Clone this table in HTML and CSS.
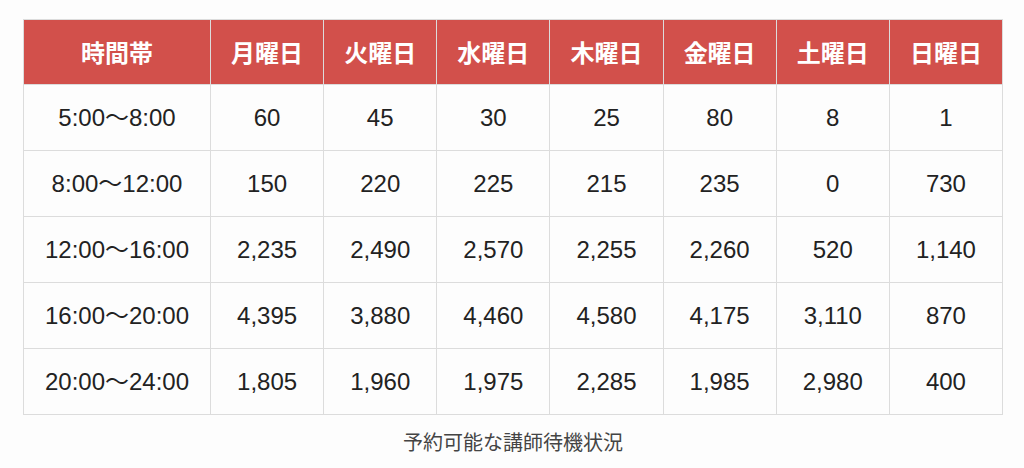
FILE: index.html
```html
<!DOCTYPE html>
<html lang="ja">
<head>
<meta charset="utf-8">
<link rel="stylesheet" href="styles.css">
</head>
<body>
<div class="wrap">
<table class="sched">
<caption>予約可能な講師待機状況</caption>
<thead>
<tr><th class="first">時間帯</th><th>月曜日</th><th>火曜日</th><th>水曜日</th><th>木曜日</th><th>金曜日</th><th>土曜日</th><th>日曜日</th></tr>
</thead>
<tbody>
<tr><td>5:00～8:00</td><td>60</td><td>45</td><td>30</td><td>25</td><td>80</td><td>8</td><td>1</td></tr>
<tr><td>8:00～12:00</td><td>150</td><td>220</td><td>225</td><td>215</td><td>235</td><td>0</td><td>730</td></tr>
<tr><td>12:00～16:00</td><td>2,235</td><td>2,490</td><td>2,570</td><td>2,255</td><td>2,260</td><td>520</td><td>1,140</td></tr>
<tr><td>16:00～20:00</td><td>4,395</td><td>3,880</td><td>4,460</td><td>4,580</td><td>4,175</td><td>3,110</td><td>870</td></tr>
<tr><td>20:00～24:00</td><td>1,805</td><td>1,960</td><td>1,975</td><td>2,285</td><td>1,985</td><td>2,980</td><td>400</td></tr>
</tbody>
</table>
</div>
</body>
</html>
```
FILE: styles.css
```css
html, body {
  margin: 0;
  padding: 0;
  background: #fdfdfd;
}
.wrap {
  padding: 19px 21px 0 23px;
}
.sched {
  width: 980px;
  border-collapse: collapse;
  table-layout: fixed;
  font-family: "Liberation Sans", "Noto Sans CJK JP", sans-serif;
  color: #222;
}
.sched caption {
  caption-side: bottom;
  padding-top: 15px;
  font-size: 20px;
  line-height: 24px;
  color: #444;
  font-family: "Noto Sans CJK JP", sans-serif;
  text-align: center;
}
.sched th, .sched td {
  border: 1px solid #dcdcdc;
  text-align: center;
  padding: 0;
  line-height: 28px;
}
.sched th {
  background: #d2504b;
  color: #fff;
  font-family: "Noto Sans CJK JP", sans-serif;
  font-weight: 700;
  font-size: 24px;
  height: 64px;
}
.sched th.first {
  width: 186px;
}
.sched td {
  font-size: 24px;
  height: 65px;
}
```
